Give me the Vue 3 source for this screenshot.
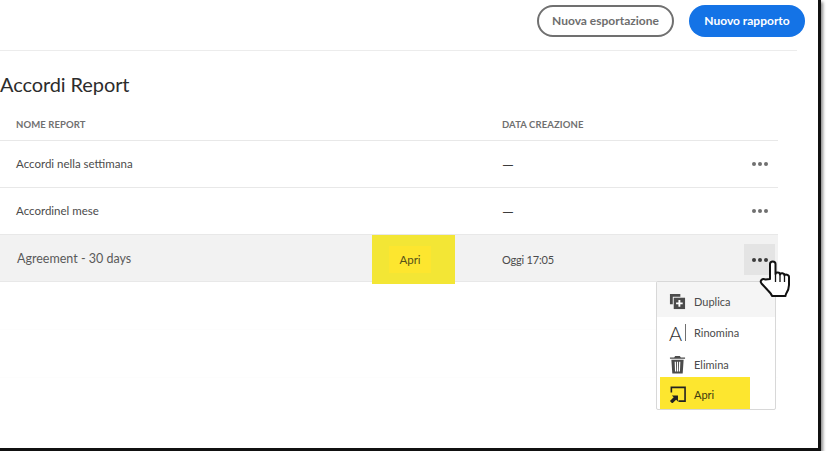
<script setup>
const rows = [
  { name: 'Accordi nella settimana', date: '—' },
  { name: 'Accordinel mese', date: '—' },
  { name: 'Agreement - 30 days', date: 'Oggi 17:05', active: true }
]
</script>

<template>
  <div class="frame">
    <header class="topbar">
      <button class="btn btn-outline">Nuova esportazione</button>
      <button class="btn btn-primary">Nuovo rapporto</button>
    </header>

    <h1 class="title">Accordi Report</h1>

    <section class="table">
      <div class="head-row">
        <span class="col-name">NOME REPORT</span>
        <span class="col-date">DATA CREAZIONE</span>
      </div>

      <div
        v-for="row in rows"
        :key="row.name"
        :class="{ row: true, 'row-active': row.active }"
      >
        <span :class="{ 'col-name': true, 'name-active': row.active }">{{ row.name }}</span>
        <span class="col-open">
          <span v-if="row.active" class="open-mark"><span class="open-btn">Apri</span></span>
        </span>
        <span :class="{ 'col-date': true, dash: !row.active, 'date-active': row.active }">{{ row.date }}</span>
        <span :class="{ dots: true, 'dots-active': row.active }"><i></i><i></i><i></i></span>
      </div>

      <div class="empty-row"></div>
      <div class="empty-row"></div>

      <ul class="menu">
        <li class="menu-item menu-hover">
          <svg class="menu-icon" width="17" height="17" viewBox="0 0 18 18">
            <path d="M1 1h11v3H4v8H1z" fill="#4b4b4b" />
            <path d="M5 5h12v12H5z" fill="#4b4b4b" />
            <path d="M10 7.500h2V10h2.500v2H12v2.500h-2V12H7.500v-2H10z" fill="#fff" />
          </svg>
          <span>Duplica</span>
        </li>
        <li class="menu-item menu-rename">
          <span class="rename-icon">A<b></b></span>
          <span>Rinomina</span>
        </li>
        <li class="menu-item menu-delete">
          <svg class="menu-icon" width="17" height="19" viewBox="0 0 18 20">
            <path d="M6.500 1h5l1 1.500H17V4H1V2.500h4.500z" fill="#4b4b4b" />
            <path d="M2.500 5h13l-1 14.500h-11zM6 7l.4 10.500h1.200L7.300 7zM8.400 7v10.500h1.200V7zM10.700 7l-.3 10.500h1.200L12 7z" fill="#4b4b4b" fill-rule="evenodd" />
          </svg>
          <span>Elimina</span>
        </li>
        <li class="menu-item menu-mark">
          <svg class="menu-icon" width="17" height="17" viewBox="0 0 18 18">
            <path d="M2.500 7V1.500H17V16H10" fill="none" stroke="#222" stroke-width="1.700" />
            <path d="M1 16l4-4-2-2h6.500v6.500l-2-2-4 4z" fill="#222" />
          </svg>
          <span>Apri</span>
        </li>
      </ul>

      <svg class="hand" width="34" height="40" viewBox="0 0 34 40">
        <path
          d="M11 19V4c0-3.500 5.500-3.500 5.500 0v10c0-2 4.500-2 4.500 .5c.5-2 4.500-1.500 4.500 1c.5-1.500 4.500-1 4.500 1.500v8c0 4-1 6-3 9c-.5 1.500-.5 2-.5 2H13c-.5-2-2-3.500-4-5.500L2.500 23.500c-2-2.500 .5-5.500 4-4z"
          fill="#fff"
          stroke="#111"
          stroke-width="2"
          stroke-linejoin="round"
        />
        <path d="M16.500 14v8M21 14.500v7.500M25.500 15.500v6.500" fill="none" stroke="#111" stroke-width="1.300" />
      </svg>
    </section>
  </div>
</template>

<style scoped>
.frame {
  box-sizing: border-box;
  width: 821px;
  height: 451px;
  background: #fff;
  border-right: 3px solid #111;
  border-bottom: 3px solid #111;
  box-shadow: 2px 2px 3px rgba(0, 0, 0, 0.45);
  font-family: Lato, "Open Sans", sans-serif;
  color: #4b4b4b;
  overflow: hidden;
}

.topbar {
  box-sizing: border-box;
  width: 797px;
  height: 51px;
  border-bottom: 1px solid #ececec;
  display: flex;
  justify-content: flex-end;
  align-items: flex-start;
  gap: 15px;
  padding-top: 5px;
}

.btn {
  font-family: inherit;
  font-size: 12px;
  font-weight: 700;
  border-radius: 16px;
  height: 32px;
  padding: 0 0 2px;
  flex: none;
}

.btn-outline {
  width: 137px;
  background: #fff;
  border: 2px solid #707070;
  color: #6e6e6e;
}

.btn-primary {
  width: 116px;
  margin-right: -8px;
  background: #1473e6;
  border: none;
  color: #fff;
}

.title {
  margin: 19px 0 0;
  font-size: 20px;
  line-height: 28px;
  font-weight: 400;
  letter-spacing: -0.1px;
  color: #2c2c2c;
}

.table {
  position: relative;
  width: 778px;
}

.head-row,
.row {
  display: grid;
  grid-template-columns: 372px 83px 47px 242px 34px;
  align-items: center;
  border-bottom: 1px solid #e8e8e8;
}

.head-row {
  margin-top: 11px;
  height: 31px;
  grid-template-columns: 502px 1fr;
  font-size: 9.500px;
  font-weight: 700;
  letter-spacing: 0.1px;
  color: #707070;
}

.head-row .col-name {
  padding-left: 16px;
}

.row {
  height: 46px;
  font-size: 11.500px;
  color: #4b4b4b;
}

.row > .col-name {
  padding-left: 16px;
  padding-bottom: 2px;
}

.row > .col-date {
  grid-column: 4;
}

.row > .dash {
  font-size: 15px;
  font-weight: 400;
  color: #3c3c3c;
}

.row > .date-active {
  font-size: 11px;
  letter-spacing: -0.2px;
}

.row-active {
  background: #f2f2f2;
}

.row > .name-active {
  font-size: 12.500px;
  padding-left: 17px;
  padding-bottom: 3px;
  color: #5a5a5a;
}

.col-open {
  height: 100%;
}

.open-mark {
  display: flex;
  align-items: center;
  height: 49px;
  padding-left: 17px;
  background: #f3e635;
}

.open-btn {
  display: flex;
  align-items: center;
  justify-content: center;
  width: 42px;
  height: 27px;
  background: #fde62f;
  color: #55501a;
}

.dots {
  display: flex;
  align-items: center;
  justify-content: center;
  gap: 2px;
  width: 31px;
  height: 31px;
}

.dots i {
  width: 4px;
  height: 4px;
  border-radius: 50%;
  background: #707070;
}

.dots-active {
  background: #e4e4e4;
}

.dots-active i {
  background: #3c3c3c;
}

.empty-row {
  height: 47px;
  border-bottom: 1px solid #fdfdfd;
}

.menu {
  position: absolute;
  left: 656px;
  top: 172px;
  width: 120px;
  height: 129px;
  box-sizing: border-box;
  margin: 0;
  padding: 0;
  list-style: none;
  background: #fff;
  border: 1px solid #d8d8d8;
  border-radius: 2px;
  display: flex;
  flex-direction: column;
  font-size: 11px;
  color: #4b4b4b;
}

.menu-item {
  box-sizing: border-box;
  display: flex;
  align-items: center;
  gap: 8px;
  padding-left: 12px;
}

.menu-hover {
  height: 35px;
  padding-top: 3px;
  background: #f5f5f5;
}

.menu-rename {
  height: 31px;
}

.menu-delete {
  height: 29px;
  padding-top: 3px;
}

.menu-icon {
  flex: none;
}

.rename-icon {
  display: flex;
  align-items: center;
  width: 17px;
  font-size: 20px;
  font-weight: 300;
  line-height: 1;
  color: #333;
}

.rename-icon b {
  width: 1px;
  height: 17px;
  margin-left: 3px;
  background: #707070;
}

.menu-mark {
  width: 90px;
  height: 32px;
  margin-left: 3px;
  padding: 3px 0 0 9px;
  background: #fde62f;
  color: #3c3a10;
}

.hand {
  position: absolute;
  left: 759px;
  top: 151px;
}
</style>

<style>
html,
body {
  background: #fff;
  overflow: hidden;
}
</style>
